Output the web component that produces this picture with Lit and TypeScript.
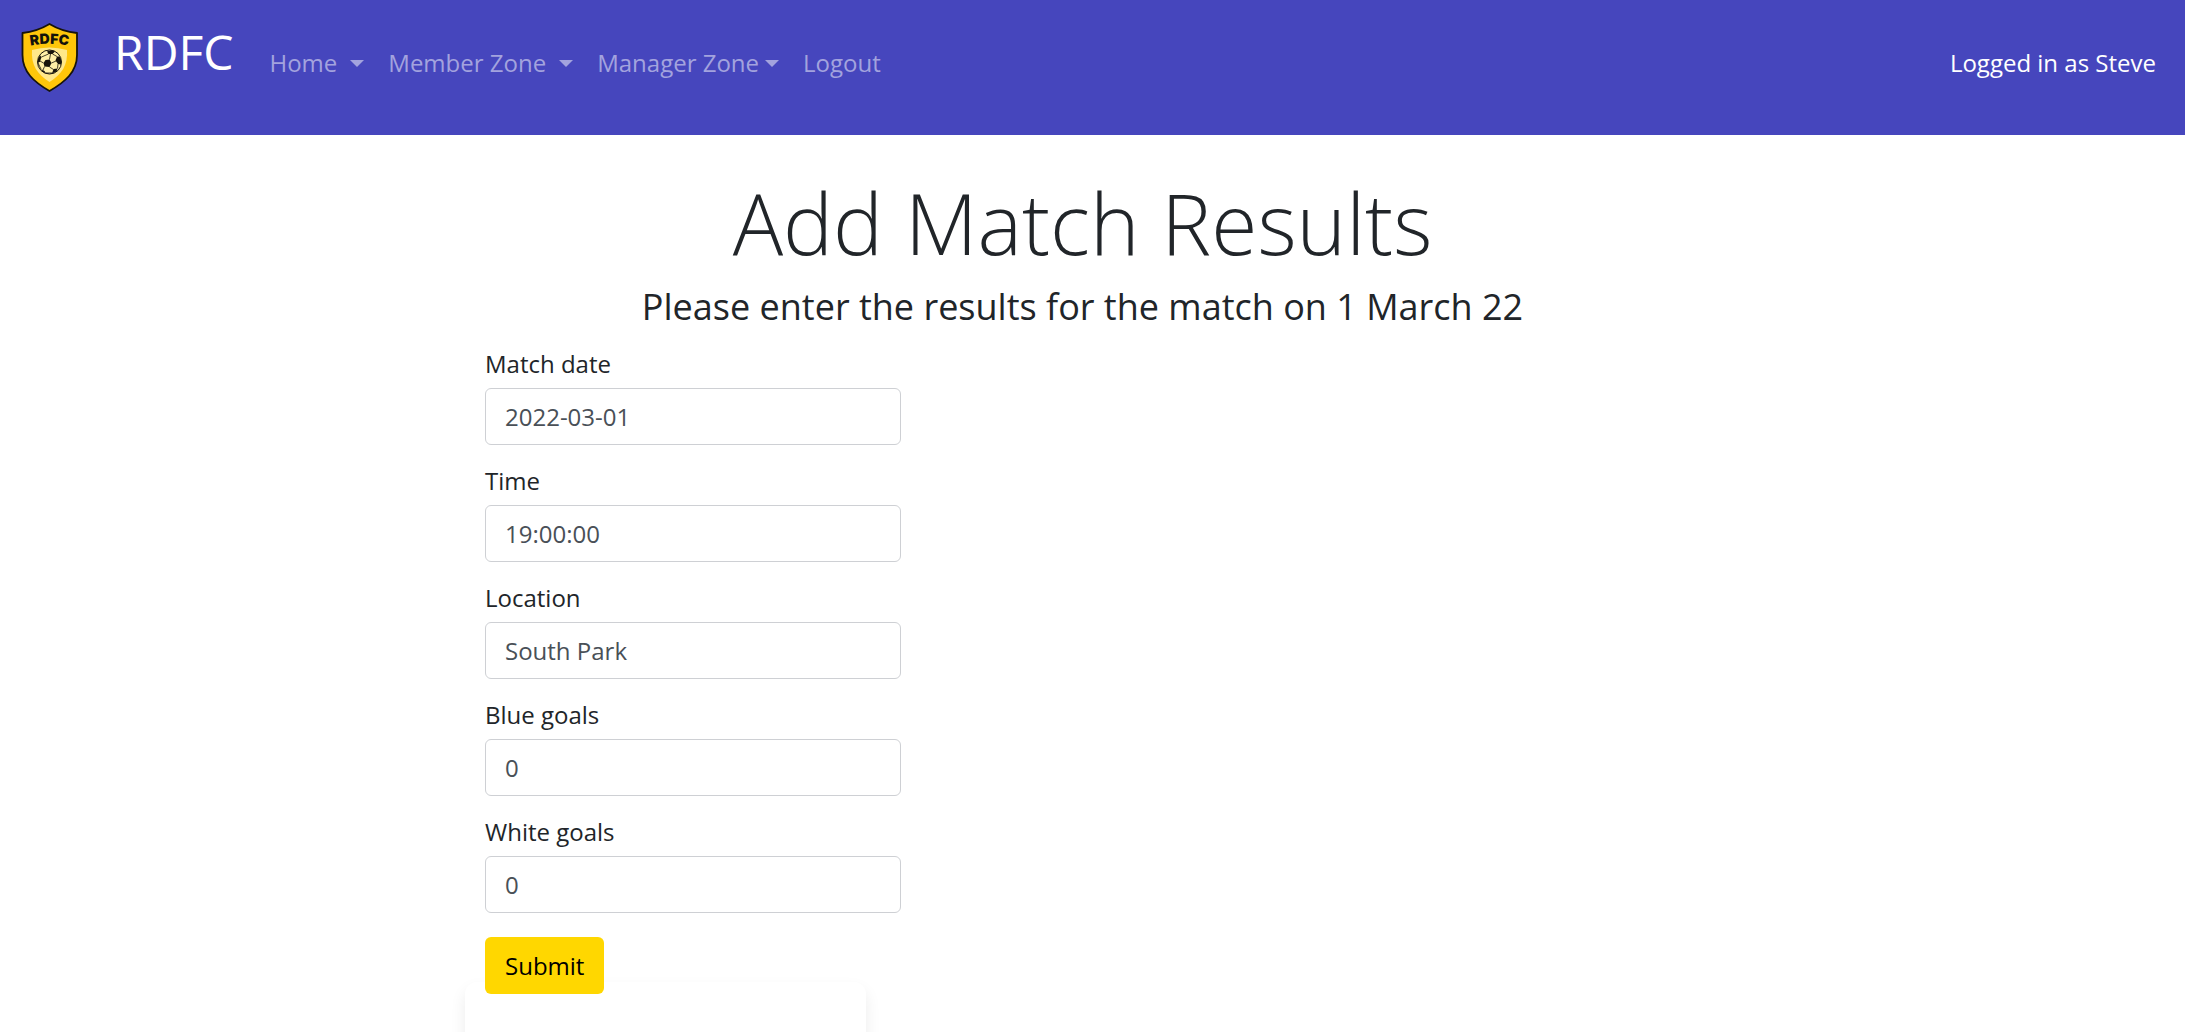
import { LitElement, html, css } from "lit";
import { customElement, property } from "lit/decorators.js";

@customElement("club-crest")
export class ClubCrest extends LitElement {
  static styles = css`
    :host { display: block; }
    .crest { display: block; width: 60px; height: 70px; }
    .name { font: 900 14px Inter, "Open Sans", sans-serif; fill: #14120a; }
  `;

  render() {
    return html`
      <svg class="crest" viewBox="0 0 60 70" role="img" aria-label="RDFC crest">
        <defs><path id="arch" d="M4 25 Q29.500 18.500 55 25" /></defs>
        <path d="M29.500 2 Q42 9.500 57 11 V33 C57 50 45 60 29.500 69 C14 60 2.500 50 2.500 33 V11 Q17 9.500 29.500 2Z"
          fill="#ffc60a" stroke="#17140b" stroke-width="1.800" stroke-linejoin="round" />
        <path d="M12 28 Q29.500 23 47 28 C48 43 42 52 29.500 60 C17 52 11 43 12 28Z" fill="#ffe88a" />
        <text class="name" text-anchor="middle"><textPath href="#arch" startOffset="50%">RDFC</textPath></text>
        <circle cx="29.500" cy="40" r="12" fill="#fff0a8" stroke="#17140b" stroke-width="1" />
        <g fill="#17140b">
          <path d="M25.500 38 L29.500 37.500 L31.500 41 L29.500 45 L24.500 44.500 L23.500 41Z" />
          <path d="M27 29.500 Q31 27.500 35 29.500 L32.500 32 L28.500 32Z" />
          <path d="M37 34.500 L39.500 34.500 Q42 38 41 42.500 L38 42 L35.500 38.500Z" />
          <path d="M33.500 47 L37.500 46.500 L36.500 49.500 L32 51.500Z" />
          <path d="M18 37 L20 33.500 L21.500 35 L20 39.500 L18 41Z" />
          <path d="M21 47 L24.500 49 L26 51.500 Q22.500 50.500 21 47Z" />
        </g>
        <g fill="none" stroke="#17140b" stroke-width="0.800">
          <path d="M29.500 37.500 L30.500 32 M31.500 41 L36 39 M29.500 45 L33.500 47.500 M24.500 44.500 L23 48 M23.500 41 L20 39 M21.500 35 L28.500 32 M32.500 32 L37 34.500 M38 42 L37.500 46.500 M18 41 L21 47 M26 51 L32.500 51" />
        </g>
      </svg>
    `;
  }
}

@customElement("match-field")
export class MatchField extends LitElement {
  @property() label = "";
  @property() value = "";

  static styles = css`
    :host { display: block; }
    .field { display: flex; flex-direction: column; gap: 12px; }
    .label { font-size: 24px; line-height: 24px; color: #212529; }
    .input {
      box-sizing: border-box;
      width: 100%;
      height: 57px;
      padding: 8px 19px;
      border: 1px solid #ced0d4;
      border-radius: 6px;
      background: #fff;
      color: #495057;
      font: inherit;
      font-size: 24px;
    }
  `;

  render() {
    return html`
      <div class="field">
        <label class="label" for="control">${this.label}</label>
        <input class="input" id="control" type="text" .value=${this.value} />
      </div>
    `;
  }
}

const MENU = [
  { label: "Home", caret: "wide" },
  { label: "Member Zone", caret: "wide" },
  { label: "Manager Zone", caret: "tight" },
  { label: "Logout", caret: "" },
];

const FIELDS = [
  { label: "Match date", value: "2022-03-01" },
  { label: "Time", value: "19:00:00" },
  { label: "Location", value: "South Park" },
  { label: "Blue goals", value: "0" },
  { label: "White goals", value: "0" },
];

@customElement("app-root")
export class AppRoot extends LitElement {
  static styles = css`
    :host {
      display: block;
      font-family: "Open Sans", "Noto Sans", sans-serif;
      font-size: 24px;
      color: #212529;
    }
    .page {
      display: flex;
      flex-direction: column;
      min-height: 100vh;
      overflow: hidden;
      background: #fff;
    }
    .navbar {
      display: flex;
      align-items: flex-start;
      box-sizing: border-box;
      height: 135px;
      padding: 22px 29px 0 20px;
      background: #4646bd;
    }
    .brand {
      display: flex;
      gap: 34px;
      color: #fff;
      font-size: 48px;
      line-height: 60px;
      text-decoration: none;
    }
    .menu {
      display: flex;
      gap: 24px;
      flex: 1;
      margin: 0;
      padding: 22px 0 0 36px;
      list-style: none;
      line-height: 38px;
    }
    .link {
      display: flex;
      align-items: center;
      color: #a3a3de;
      text-decoration: none;
      white-space: nowrap;
    }
    .caret {
      border: 7px solid transparent;
      border-top-color: currentColor;
      border-bottom: 0;
    }
    .wide { margin-left: 13px; }
    .tight { margin-left: 6px; }
    .user { padding-top: 22px; line-height: 38px; color: #fff; white-space: nowrap; }
    .main {
      display: flex;
      flex-direction: column;
      flex: 1;
      box-sizing: border-box;
      width: 100%;
      max-width: 1255px;
      margin: 0 auto;
      padding: 38px 20px 0 0;
    }
    .title {
      margin: 0;
      font-size: 84px;
      font-weight: 300;
      line-height: 100px;
      text-align: center;
    }
    .subtitle {
      margin: 12px 0 24px;
      font-size: 36px;
      font-weight: 400;
      line-height: 43px;
      text-align: center;
    }
    .form {
      display: flex;
      flex-direction: column;
      gap: 24px;
      max-width: 416px;
      padding-left: 20px;
    }
    .submit {
      align-self: flex-start;
      position: relative;
      z-index: 1;
      height: 57px;
      padding: 0 20px;
      border: 0;
      border-radius: 6px;
      background: #ffd700;
      color: #000;
      font: inherit;
    }
    .card {
      flex: 1;
      box-sizing: border-box;
      width: 100%;
      max-width: 401px;
      min-height: 69px;
      margin: -12px 0 -20px;
      border-radius: 12px;
      background: #fff;
      box-shadow: 0 8px 16px rgba(0, 0, 0, 0.08);
    }
  `;

  render() {
    return html`
      <div class="page">
        <nav class="navbar" aria-label="Main">
          <a class="brand" href="#"><club-crest></club-crest><span>RDFC</span></a>
          <ul class="menu">
            ${MENU.map(
              (item) => html`<li>
                <a class="link" href="#">${item.label}${item.caret ? html`<span class="caret ${item.caret}"></span>` : ""}</a>
              </li>`
            )}
          </ul>
          <span class="user">Logged in as Steve</span>
        </nav>
        <main class="main">
          <h1 class="title">Add Match Results</h1>
          <h2 class="subtitle">Please enter the results for the match on 1 March 22</h2>
          <form class="form" @submit=${(e: Event) => e.preventDefault()}>
            ${FIELDS.map((f) => html`<match-field .label=${f.label} .value=${f.value}></match-field>`)}
            <button class="submit" type="submit">Submit</button>
          </form>
          <div class="card"></div>
        </main>
      </div>
    `;
  }
}
